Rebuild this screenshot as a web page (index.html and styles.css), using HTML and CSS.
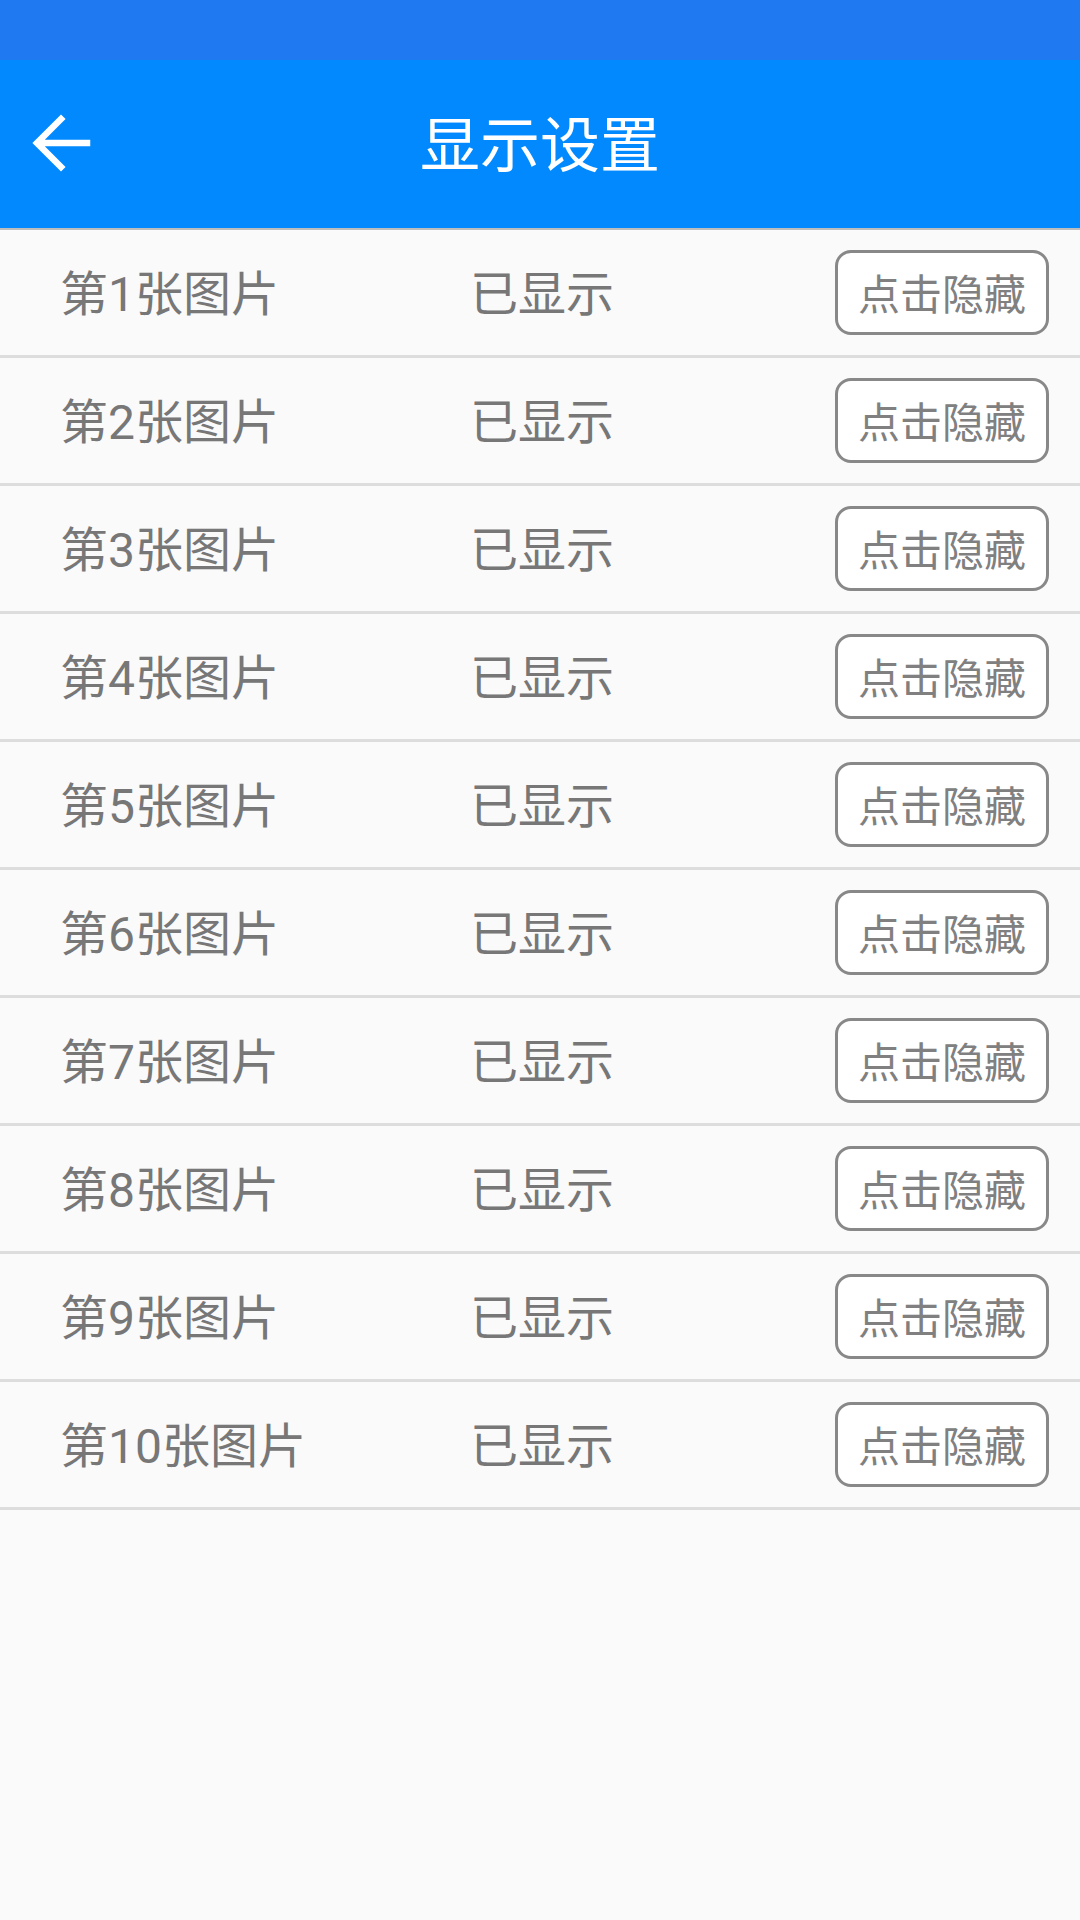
FILE: index.html
```html
<!DOCTYPE html>
<html>
<head>
    <meta charset="UTF-8">
    <title>显示设置</title>
    <link rel="stylesheet" href="styles.css">
</head>
<body>
    <div class="status-bar"></div>
    <div class="app-bar">
        <svg class="back" width="60" height="60" viewBox="0 0 60 60">
            <path d="M56 29 H8 M30 5 L6 29 L30 53" fill="none" stroke="#fff" stroke-width="6.5" stroke-linecap="square" stroke-linejoin="miter"/>
        </svg>
        <h1>显示设置</h1>
    </div>

    <div class="list">
        <div class="row"><span class="name">第1张图片</span><span class="state">已显示</span><button>点击隐藏</button></div>
        <div class="row"><span class="name">第2张图片</span><span class="state">已显示</span><button>点击隐藏</button></div>
        <div class="row"><span class="name">第3张图片</span><span class="state">已显示</span><button>点击隐藏</button></div>
        <div class="row"><span class="name">第4张图片</span><span class="state">已显示</span><button>点击隐藏</button></div>
        <div class="row"><span class="name">第5张图片</span><span class="state">已显示</span><button>点击隐藏</button></div>
        <div class="row"><span class="name">第6张图片</span><span class="state">已显示</span><button>点击隐藏</button></div>
        <div class="row"><span class="name">第7张图片</span><span class="state">已显示</span><button>点击隐藏</button></div>
        <div class="row"><span class="name">第8张图片</span><span class="state">已显示</span><button>点击隐藏</button></div>
        <div class="row"><span class="name">第9张图片</span><span class="state">已显示</span><button>点击隐藏</button></div>
        <div class="row"><span class="name">第10张图片</span><span class="state">已显示</span><button>点击隐藏</button></div>
    </div>
</body>
</html>
```

FILE: styles.css
```css
body {
    margin: 0;
    font-family: Roboto, "Noto Sans CJK SC", sans-serif;
    background-color: #fafafa;
    height: 1920px;
}
.status-bar {
    height: 60px;
    background-color: #1f7af2;
}
.app-bar {
    position: relative;
    height: 168px;
    background-color: #0289fe;
    border-bottom: 2px solid #bdbdbd;
    display: flex;
    align-items: center;
    justify-content: center;
}
.app-bar h1 {
    margin: 0;
    padding-top: 5px;
    font-size: 60px;
    font-weight: normal;
    color: #fff;
    line-height: 1;
}
.back {
    position: absolute;
    left: 31px;
    top: 54px;
}
.row {
    height: 125px;
    border-bottom: 3px solid #dddddd;
    display: flex;
    align-items: center;
    color: #777;
    font-size: 48px;
}
.name {
    width: 410px;
    padding-left: 60px;
    padding-bottom: 5px;
}
.state {
    flex: 1;
    padding-bottom: 5px;
}
button {
    width: 214px;
    height: 85px;
    margin-right: 31px;
    padding: 0 0 3px;
    font-family: Roboto, "Noto Sans CJK SC", sans-serif;
    font-size: 42px;
    color: #808080;
    background: #fff;
    border: 3px solid #888;
    border-radius: 16px;
}
```
